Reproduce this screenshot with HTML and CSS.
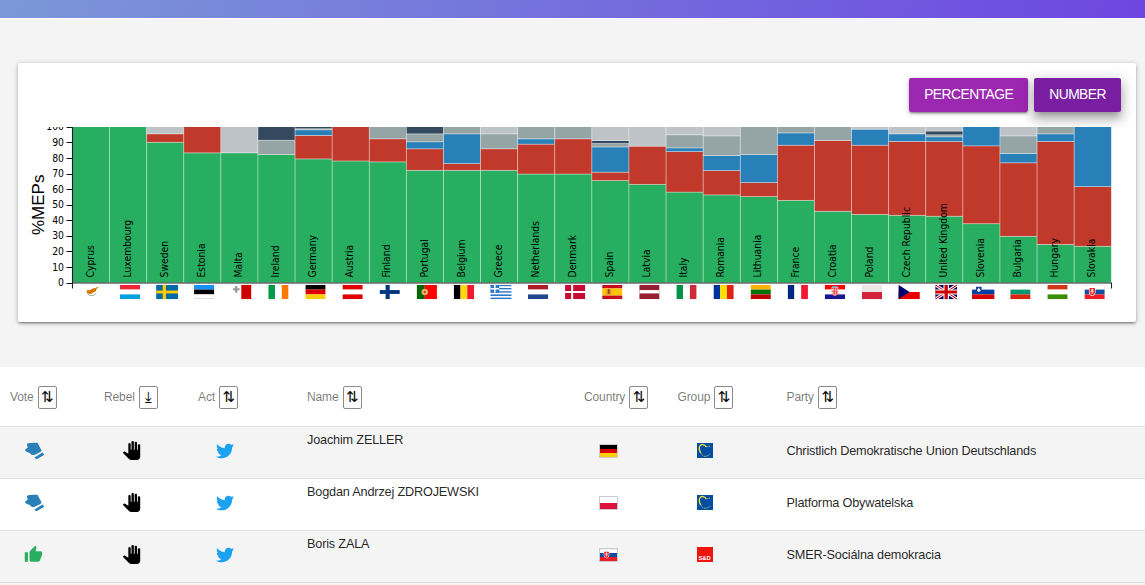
FILE: index.html
```html
<!DOCTYPE html>
<html lang="en">
<head>
<meta charset="utf-8">
<title>MEP votes</title>
<link rel="stylesheet" href="styles.css">
</head>
<body>
<svg class="defs" width="0" height="0" aria-hidden="true">
  <symbol id="mitten" viewBox="0 0 58 53"><path d="M1 23 9 16Q4 9 7 4 15 1 38 2L50 24Q51 28 47 30L30 39Q20 42 15 33 8 31 1 27 0 25 1 23zM29 47 53 32Q55 32 58 37 58 39 57 40L36 52Q33 53 32 51z"/></symbol>
  <symbol id="thumb" viewBox="0 0 24 24"><path d="M1 21h4V9H1v12zm22-11c0-1.100-.9-2-2-2h-6.310l.95-4.570.03-.32c0-.41-.17-.79-.44-1.060L14.170 1 7.590 7.590C7.220 7.950 7 8.450 7 9v10c0 1.100.9 2 2 2h9c.83 0 1.540-.5 1.840-1.220l3.020-7.050c.09-.23.14-.47.14-.73v-2z"/></symbol>
  <symbol id="hand" viewBox="0 0 24 24"><path d="M23 5.500V20c0 2.200-1.800 4-4 4h-7.300c-1.080 0-2.100-.43-2.850-1.190L1 14.830s1.260-1.230 1.300-1.250c.22-.19.490-.29.790-.29.220 0 .42.060.6.160.04.010 4.310 2.460 4.310 2.460V4c0-.83.67-1.500 1.500-1.500S11 3.170 11 4v7h1V1.500c0-.83.67-1.500 1.500-1.500S15 .67 15 1.500V11h1V2.500c0-.83.67-1.500 1.500-1.500s1.500.67 1.500 1.500V11h1V5.500c0-.83.67-1.500 1.500-1.500s1.500.67 1.500 1.500z"/></symbol>
  <symbol id="bird" viewBox="0 0 512 512"><path d="M459.370 151.716c.325 4.548.325 9.097.325 13.645 0 138.720-105.583 298.558-298.558 298.558-59.452 0-114.680-17.219-161.137-47.106 8.447.974 16.568 1.299 25.340 1.299 49.055 0 94.213-16.568 130.274-44.832-46.132-.975-84.792-31.188-98.112-72.772 6.498.974 12.995 1.624 19.818 1.624 9.421 0 18.843-1.300 27.614-3.573-48.081-9.747-84.143-51.980-84.143-102.985v-1.299c13.969 7.797 30.214 12.670 47.431 13.319-28.264-18.843-46.781-51.005-46.781-87.391 0-19.492 5.197-37.360 14.294-52.954 51.655 63.675 129.300 105.258 216.365 109.807-1.624-7.797-2.599-15.918-2.599-24.040 0-57.828 46.782-104.934 104.934-104.934 30.213 0 57.502 12.670 76.670 33.137 23.715-4.548 46.456-13.320 66.599-25.340-7.798 24.366-24.366 44.833-46.132 57.827 21.117-2.273 41.584-8.122 60.426-16.243-14.292 20.791-32.161 39.308-52.628 54.253z"/></symbol>
  <symbol id="epp" viewBox="0 0 16 15"><path fill="#034ea2" d="M0 0h16v15H0z"/><path d="M9.300 4C8 1.300 4.500.5 2.800 3c-1.300 2.500-.2 5 1 7" fill="none" stroke="#f6df3a" stroke-width="1.300"/><path d="M9.300 4c1.200-.8 2.800-.8 4.200-.2M3.800 10c.8 1.500 1.700 2.500 3 3.300 2.600.3 4.600-.7 6.600-2.500" fill="none" stroke="#b9b86a" stroke-width=".9" stroke-dasharray="1.600 .7"/></symbol>
</svg>
<header class="topbar"></header>
<main>
  <section class="card">
    <div class="actions">
      <button class="btn">PERCENTAGE</button>
      <button class="btn btn-active">NUMBER</button>
    </div>
    <svg id="chart" class="chart" width="1118" height="190"></svg>
  </section>
  <section class="table">
    <div class="row head">
      <div>Vote <button class="sort">⇅</button></div>
      <div>Rebel <button class="sort">⤓</button></div>
      <div>Act <button class="sort">⇅</button></div>
      <div>Name <button class="sort">⇅</button></div>
      <div>Country <button class="sort">⇅</button></div>
      <div>Group <button class="sort">⇅</button></div>
      <div>Party <button class="sort">⇅</button></div>
    </div>
    <div class="row odd">
      <div><svg class="mitten"><use href="#mitten"/></svg></div>
      <div><svg class="hand"><use href="#hand"/></svg></div>
      <div><svg class="bird"><use href="#bird"/></svg></div>
      <div class="name">Joachim ZELLER</div>
      <div><svg class="flag" data-flag="Germany"></svg></div>
      <div><svg class="group"><use href="#epp"/></svg></div>
      <div class="party">Christlich Demokratische Union Deutschlands</div>
    </div>
    <div class="row">
      <div><svg class="mitten"><use href="#mitten"/></svg></div>
      <div><svg class="hand"><use href="#hand"/></svg></div>
      <div><svg class="bird"><use href="#bird"/></svg></div>
      <div class="name">Bogdan Andrzej ZDROJEWSKI</div>
      <div><svg class="flag" data-flag="Poland"></svg></div>
      <div><svg class="group"><use href="#epp"/></svg></div>
      <div class="party">Platforma Obywatelska</div>
    </div>
    <div class="row odd">
      <div><svg class="thumb"><use href="#thumb"/></svg></div>
      <div><svg class="hand"><use href="#hand"/></svg></div>
      <div><svg class="bird"><use href="#bird"/></svg></div>
      <div class="name">Boris ZALA</div>
      <div><svg class="flag" data-flag="Slovakia"></svg></div>
      <div><span class="group sd">S&amp;D</span></div>
      <div class="party">SMER-Sociálna demokracia</div>
    </div>
  </section>
</main>
<script src="chart.js"></script>
</body>
</html>
```
FILE: styles.css
```css
* { box-sizing: border-box; }
body {
  margin: 0;
  height: 585px;
  overflow: hidden;
  background: #f4f4f4;
  font-family: "Liberation Sans", Arial, sans-serif;
}
.defs { position: absolute; }
.topbar {
  height: 19px;
  border-bottom: 1px solid #fff;
  background: linear-gradient(100deg, #7b98d8, #6d46e1);
}
.card {
  width: 1118px;
  height: 259px;
  margin: 44px 0 45px 18px;
  padding-top: 15px;
  background: #fff;
  border-radius: 2px;
  box-shadow: 0 1px 5px rgba(0,0,0,.28), 0 2px 2px rgba(0,0,0,.16), 0 3px 1px -2px rgba(0,0,0,.14);
}
.actions {
  display: flex;
  justify-content: flex-end;
  gap: 6px;
  padding-right: 15px;
  margin-bottom: 15px;
}
.btn {
  height: 34px;
  padding: 0 15px;
  border: 0;
  border-radius: 2px;
  background: #9c27b0;
  color: #fff;
  font: 13.8px/34px "Liberation Sans", Arial, sans-serif;
  letter-spacing: -.5px;
  box-shadow: 0 2px 2px rgba(0,0,0,.14), 0 3px 1px -2px rgba(0,0,0,.2), 0 1px 5px rgba(0,0,0,.25);
}
.btn-active {
  background: #7b1fa2;
  box-shadow: 0 8px 10px 1px rgba(0,0,0,.16), 0 3px 14px 2px rgba(0,0,0,.18), 0 5px 5px -3px rgba(0,0,0,.2);
}
.chart { display: block; overflow: hidden; }
.label {
  font: 10.3px "DejaVu Sans Condensed", "DejaVu Sans", sans-serif;
  font-stretch: condensed;
}
.axis-title { font: 17px "Liberation Sans", Arial, sans-serif; }
.table { background: #fff; }
.row {
  display: grid;
  grid-template-columns: 94px 94px 109px 277px 93.5px 109px 1fr;
  align-items: center;
  height: 52px;
  padding: 0 0 4px 10px;
  border-bottom: 1px solid #e0e0e0;
  font-size: 13px;
  color: rgba(0,0,0,.87);
}
.row.odd { background: #f4f4f4; }
.row.head {
  height: 60px;
  padding-bottom: 0;
  font-size: 12px;
  letter-spacing: -.12px;
  color: rgba(0,0,0,.54);
}
.head > div { display: flex; align-items: center; gap: 4px; padding-top: 1px; }
.sort {
  display: grid;
  place-items: center;
  width: 19px;
  height: 23px;
  padding: 0 0 1px;
  border: 1px solid #8a8a8a;
  border-radius: 2px;
  background: #fff;
  color: #000;
  font: 15px/20px "DejaVu Sans", sans-serif;
}
.name, .party { font-size: 12.7px; letter-spacing: -.18px; }
.name { align-self: start; padding-top: 6px; }
.row svg { display: block; }
.mitten { width: 19px; height: 17.5px; margin-left: 15px; fill: #2980b9; }
.thumb { width: 19px; height: 19px; margin-left: 14px; fill: #27ae60; }
.hand { width: 19px; height: 19px; margin-left: 17.5px; }
.bird { width: 18px; height: 18px; margin-left: 18px; fill: #1da1f2; }
.flag { width: 19px; height: 14px; margin-left: 15px; border: 1px solid #ccc; }
.group { width: 16px; height: 15px; margin-left: 19px; }
.sd {
  display: block;
  padding-top: 7px;
  background: #f0140f;
  color: #fff;
  font: bold 5.8px/8px "Liberation Sans", Arial, sans-serif;
  text-align: center;
}
```
FILE: chart.js
```js
const GREEN = '#27ae60', RED = '#c0392b', BLUE = '#2980b9';
const GRAY = '#95a5a6', NAVY = '#34495e', SILVER = '#bdc3c7';

// Each entry: country, then [colour, cumulative percentage] segments.
const data = [
  ['Cyprus', [GREEN, 101]],
  ['Luxembourg', [GREEN, 101]],
  ['Sweden', [GREEN, 90.2], [RED, 95.6], [SILVER, 101]],
  ['Estonia', [GREEN, 83.4], [RED, 101]],
  ['Malta', [GREEN, 83.4], [SILVER, 101]],
  ['Ireland', [GREEN, 82.3], [GRAY, 91.5], [NAVY, 101]],
  ['Germany', [GREEN, 79.5], [RED, 94.6], [BLUE, 98.2], [GRAY, 98.9], [NAVY, 101]],
  ['Austria', [GREEN, 78.2], [RED, 101]],
  ['Finland', [GREEN, 77.6], [RED, 92.4], [GRAY, 101]],
  ['Portugal', [GREEN, 72.2], [RED, 86], [BLUE, 90.5], [GRAY, 95.6], [NAVY, 101]],
  ['Belgium', [GREEN, 72.2], [RED, 76.5], [BLUE, 95.6], [GRAY, 101]],
  ['Greece', [GREEN, 72.2], [RED, 86], [GRAY, 95.6], [SILVER, 101]],
  ['Netherlands', [GREEN, 69.8], [RED, 89], [BLUE, 92.4], [GRAY, 101]],
  ['Denmark', [GREEN, 69.8], [RED, 92.4], [GRAY, 101]],
  ['Spain', [GREEN, 65.6], [RED, 71], [BLUE, 87.2], [GRAY, 89.4], [NAVY, 91.3], [SILVER, 101]],
  ['Latvia', [GREEN, 63.2], [RED, 87.7], [SILVER, 101]],
  ['Italy', [GREEN, 58.2], [RED, 84.2], [BLUE, 86.6], [GRAY, 95], [SILVER, 101]],
  ['Romania', [GREEN, 56.4], [RED, 72], [BLUE, 81.7], [GRAY, 94.3], [SILVER, 101]],
  ['Lithuania', [GREEN, 55.3], [RED, 64.3], [BLUE, 82.3], [GRAY, 101]],
  ['France', [GREEN, 52.9], [RED, 88.3], [BLUE, 96.2], [GRAY, 101]],
  ['Croatia', [GREEN, 45.9], [RED, 91.3], [GRAY, 101]],
  ['Poland', [GREEN, 43.9], [RED, 88.3], [BLUE, 98.6], [SILVER, 101]],
  ['Czech Republic', [GREEN, 43.3], [RED, 90.7], [BLUE, 95.6], [SILVER, 101]],
  ['United Kingdom', [GREEN, 42.7], [RED, 90.7], [BLUE, 93.7], [GRAY, 95], [NAVY, 97.4], [SILVER, 101]],
  ['Slovenia', [GREEN, 37.9], [RED, 87.9], [BLUE, 101]],
  ['Bulgaria', [GREEN, 29.8], [RED, 77], [BLUE, 83], [GRAY, 94.3], [SILVER, 101]],
  ['Hungary', [GREEN, 24.6], [RED, 90.7], [BLUE, 95.6], [GRAY, 101]],
  ['Slovakia', [GREEN, 23.4], [RED, 61.7], [BLUE, 101]],
];

const rect = (x, y, w, h, c, extra = '') =>
  `<rect x="${x}" y="${y}" width="${w}" height="${h}" fill="${c}" ${extra}/>`;
const path = (d, c, w) => w
  ? `<path d="${d}" fill="none" stroke="${c}" stroke-width="${w}"/>`
  : `<path d="${d}" fill="${c}"/>`;
const rows = (...cs) => cs.map((c, i) => rect(0, i * 15 / cs.length, 20, 15 / cs.length, c)).join('');
const cols = (...cs) => cs.map((c, i) => rect(i * 20 / cs.length, 0, 20 / cs.length, 15, c)).join('');
const nordic = (bg, c, w) => rect(0, 0, 20, 15, bg) + rect(6, 0, w, 15, c) + rect(0, 7.5 - w / 2, 20, w, c);
const shield = (x, y) =>
  path(`M${x} ${y}h6.500v5q0 3-3.250 4.200q-3.250-1.200-3.250-4.200z`, '#fff') +
  path(`M${x + .6} ${y + .5}h5.300v4.500q0 2.300-2.650 3.400q-2.650-1.100-2.650-3.400z`, '#ee1c25') +
  path(`M${x + 3.25} ${y + 1.2}v5.500M${x + 2} ${y + 2.6}h2.500M${x + 1.6} ${y + 4.4}h3.300`, '#fff', .8);

// Flags share a 20 x 15 box.
const flags = {
  Cyprus: path('M3.500 6l4-.6 2-1.500 2-.2 4.500-2-3 3.400.2 1.500-2.700 1.200-2 1.900-4-.6z', '#d57800') +
    path('M4.500 9q1.500 2.500 4.500 2.200 3 0 4-2.400', '#9a9f83', .9),
  Luxembourg: rows('#ed2939', '#fff', '#00a1de'),
  Sweden: nordic('#006aa7', '#fecc00', 3),
  Estonia: rows('#1791ff', '#000', '#fff') + rect(0, 14.1, 20, .9, '#ccc') + path('M.3 10v5M19.700 10v5', '#ddd', .6),
  Malta: rect(10, 0, 10, 15, '#cf0000') + path('M5 1.300v7M1.800 4.700h6.500', '#999', 2.2),
  Ireland: cols('#009a49', '#fff', '#ff7900'),
  Germany: rows('#000', '#d00', '#ffce00'),
  Austria: rows('#df0000', '#fff', '#df0000'),
  Finland: nordic('#fff', '#003580', 4),
  Portugal: rect(0, 0, 8, 15, '#006600') + rect(8, 0, 12, 15, '#f00') +
    '<circle cx="8" cy="7.500" r="2.700" fill="#dfd7cb" stroke="#e8a33d" stroke-width="1.200"/><circle cx="8" cy="7.500" r="1.300" fill="#d43b35"/>',
  Belgium: cols('#000', '#ffd90c', '#f31830'),
  Greece: rows('#2b78c8', '#fff', '#2b78c8', '#fff', '#2b78c8', '#fff', '#2b78c8', '#fff', '#2b78c8') +
    rect(0, 0, 8.3, 8.3, '#2b78c8') + path('M4.150 0v8.300M0 4.150h8.300', '#fff', 1.5),
  Netherlands: rows('#ae1c28', '#fff', '#21468b'),
  Denmark: nordic('#c60c30', '#fff', 2),
  Spain: rows('#c60b1e', '#ffc400', '#ffc400', '#c60b1e') + path('M4 5h5v5H4z', '#d99a2b') + path('M5.700 4.500h1.600v5h-1.600z', '#a93a2a'),
  Latvia: rect(0, 0, 20, 15, '#981e32') + rect(0, 5.5, 20, 3.5, '#fff'),
  Italy: cols('#009246', '#fff', '#ce2b37'),
  Romania: cols('#00319c', '#ffde00', '#de2110'),
  Lithuania: rows('#ffb300', '#007308', '#bf0000'),
  France: cols('#00267f', '#fff', '#f31830'),
  Croatia: rows('#f00', '#fff', '#171796') + rect(6.7, 2.5, 6.6, 6.5, '#fff') + path('M6.700 8.500h6.600q0 2-3.300 3.500-3.300-1.500-3.300-3.500z', '#f77') +
    path('M6.700 3.700h6.600M8 5.300h5.300M6.700 6.900h6.600M8 8.500h5.300', '#e33', 1.4) +
    path('M8.300 2.800v8M10.700 2.800v8M12.600 2.800v7', '#fff', .5) + rect(7.4, 1.3, 5.2, 1.5, '#5aa5dc'),
  Poland: rows('#e9e8e7', '#d4213d'),
  'Czech Republic': rows('#fff', '#e80000') + path('M0 0l10.500 7.500L0 15z', '#00006e'),
  'United Kingdom': rect(0, 0, 20, 15, '#006') + path('M0 0l20 15M20 0L0 15', '#fff', 3) +
    path('M0 0l20 15M20 0L0 15', '#c00', 1) + path('M10 0v15M0 7.500h20', '#fff', 5) + path('M10 0v15M0 7.500h20', '#c00', 3),
  Slovenia: rows('#fff', '#003da5', '#d50000') + path('M3.500 2h5v3.500q-.5 2-2.500 3-2-1-2.500-3z', '#1c4a9b') + path('M4.300 6l1.700-3 1.700 3-1.700 1.500z', '#fff'),
  Bulgaria: rows('#fff', '#00966e', '#d62612'),
  Hungary: rows('#d43516', '#fff', '#388d00'),
  Slovakia: rows('#fff', '#0b4ea2', '#ee1c25') + path('M0 0v5M20 0v5M0 .2h20', '#ccc', .6) + shield(4.4, 2.8),
};
const wide = { Sweden: 22, Greece: 21.3, 'Czech Republic': 21.5, 'United Kingdom': 22, Slovenia: 22.6 };

const x0 = 54.5, step = 37.1, zero = 155.7, unit = 1.557;
const yOf = v => zero - v * unit;
let out = '';

for (let v = 0; v <= 100; v += 10) {
  const y = yOf(v);
  out += `<text class="label" x="46" y="${y + 3.4}" text-anchor="end">${v}</text>`;
  out += path(`M48.500 ${Math.round(y - .2) + .5}H54.500`, '#111', 1);
}
data.forEach(([name, ...segments], i) => {
  const x = x0 + i * step;
  let prev = 0;
  for (const [colour, top] of segments) {
    out += rect(x, yOf(top), step, (top - prev) * unit, colour, 'stroke="#fff" stroke-width=".8" stroke-opacity=".4"');
    prev = top;
  }
});
data.forEach(([name], i) => {
  const x = x0 + i * step;
  out += `<text class="label" transform="translate(${x + 21.1} 150.500) rotate(-90)">${name}</text>`;
  const w = wide[name] || 20.3;
  out += `<svg x="${x + 20.4 - w / 2}" y="157.800" width="${w}" height="14.400" viewBox="0 0 20 15" preserveAspectRatio="none">${flags[name]}</svg>`;
});
out += path('M54.500 0V161.500M54.500 156H1093.500V161.500', '#222', 1.1);
out += '<text class="axis-title" transform="translate(26 108) rotate(-90)">%MEPs</text>';
document.getElementById('chart').innerHTML = out;

const tableFlags = { ...flags, Poland: rows('#fff', '#dc143c') };
document.querySelectorAll('[data-flag]').forEach(el => {
  el.setAttribute('viewBox', '0 0 20 15');
  el.setAttribute('preserveAspectRatio', 'none');
  el.innerHTML = tableFlags[el.dataset.flag];
});
```
